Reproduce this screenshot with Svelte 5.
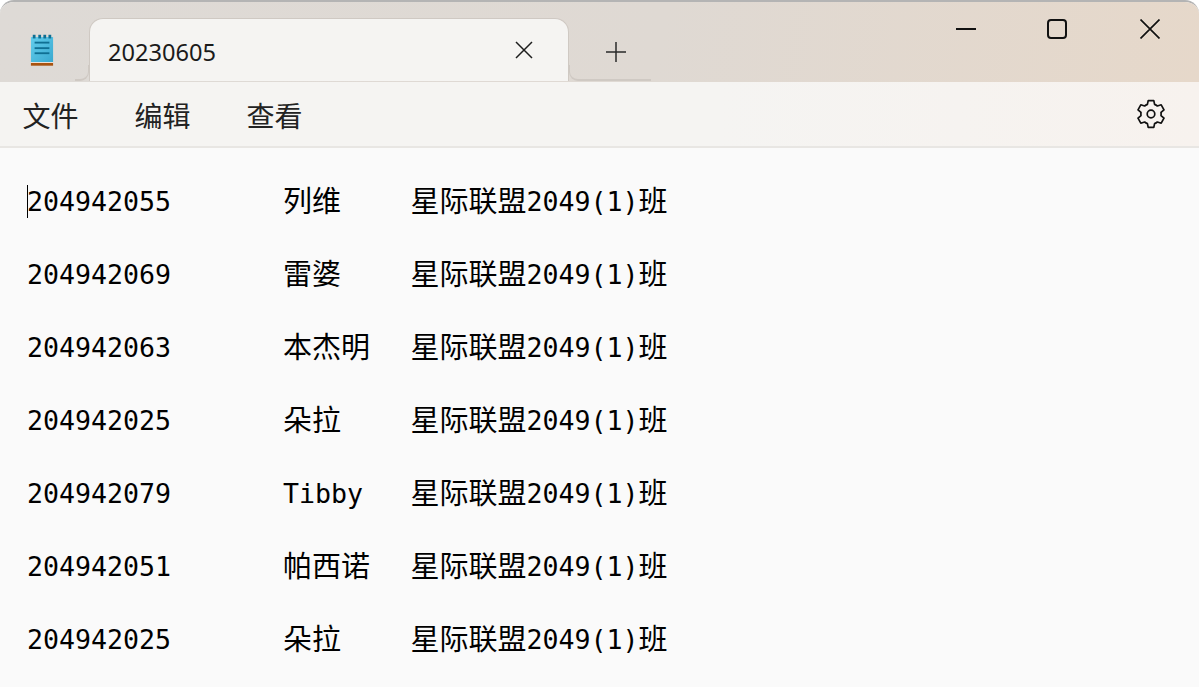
<script>
    const rows = [
        ['204942055', '列维'],
        ['204942069', '雷婆'],
        ['204942063', '本杰明'],
        ['204942025', '朵拉'],
        ['204942079', 'Tibby'],
        ['204942051', '帕西诺'],
        ['204942025', '朵拉']
    ];
    const menus = ['文件', '编辑', '查看'];
    const hasCjk = (s) => /[^\x00-\x7f]/.test(s);
</script>

<div class="window">
    <header class="titlebar">
        <div class="appicon">
            <svg viewBox="0 0 26 34" width="24" height="32" aria-hidden="true">
                <defs>
                    <linearGradient id="pad" x1="0" y1="0" x2="1" y2="1">
                        <stop offset="0" stop-color="#63cdec" />
                        <stop offset="1" stop-color="#3aa9d0" />
                    </linearGradient>
                </defs>
                <rect x="1" y="3" width="24" height="27" fill="url(#pad)" />
                <rect x="1" y="30" width="24" height="1" fill="#f4efe9" />
                <rect x="1" y="31" width="24" height="3" fill="#a9530f" />
                <g fill="#0f6f93">
                    <rect x="3" y="0.5" width="3" height="4" />
                    <rect x="9" y="0.5" width="3" height="4" />
                    <rect x="14.5" y="0.5" width="3" height="4" />
                    <rect x="20" y="0.5" width="3" height="4" />
                    <rect x="5" y="8" width="16" height="2" />
                    <rect x="5" y="14" width="16" height="2" />
                    <rect x="5" y="19.5" width="16" height="2" />
                </g>
            </svg>
        </div>
        <div class="tab">
            <span class="tab-title">20230605</span>
            <svg class="tab-close" viewBox="0 0 18 18" width="18" height="18" aria-hidden="true">
                <path d="M1 1 17 17M17 1 1 17" stroke="#1d1d1d" stroke-width="1.5" fill="none" />
            </svg>
        </div>
        <svg class="tab-add" viewBox="0 0 20 20" width="20" height="20" aria-hidden="true">
            <path d="M10 0V20M0 10H20" stroke="#2a2a2a" stroke-width="1.5" fill="none" />
        </svg>
        <div class="controls">
            <svg viewBox="0 0 20 20" width="20" height="20" aria-hidden="true">
                <path d="M0 10H20" stroke="#111" stroke-width="2" fill="none" />
            </svg>
            <svg viewBox="0 0 20 20" width="20" height="20" aria-hidden="true">
                <rect x="1" y="1" width="18" height="18" rx="3" stroke="#111" stroke-width="2" fill="none" />
            </svg>
            <svg viewBox="0 0 20 20" width="20" height="20" aria-hidden="true">
                <path d="M0.5 0.5 19.5 19.5M19.5 0.5 0.5 19.5" stroke="#111" stroke-width="1.7" fill="none" />
            </svg>
        </div>
    </header>

    <nav class="menubar">
        {#each menus as menu}
            <span class="menu">{menu}</span>
        {/each}
        <svg class="gear" viewBox="0 0 28 30" width="28" height="30" aria-hidden="true">
            <path
                d="M11.2 1.6 L16.8 1.6 L17.6 5.4 Q19.2 6 20.4 7 L24.2 5.8 L27 10.8 L24 13.4 Q24.2 15 24 16.6 L27 19.2 L24.2 24.2 L20.4 23 Q19.2 24 17.6 24.6 L16.8 28.4 L11.2 28.4 L10.4 24.6 Q8.8 24 7.6 23 L3.8 24.2 L1 19.2 L4 16.6 Q3.8 15 4 13.4 L1 10.8 L3.8 5.8 L7.6 7 Q8.8 6 10.4 5.4 Z"
                fill="none" stroke="#111" stroke-width="1.7" stroke-linejoin="round"
            />
            <circle cx="14" cy="15" r="3.8" fill="none" stroke="#111" stroke-width="1.7" />
        </svg>
    </nav>

    <main class="editor">
        {#each rows as [id, name], i}
            <div class="row">
                <span class="id">{#if i === 0}<i class="caret"></i>{/if}{id}</span>
                <span><span class:cjk={hasCjk(name)}>{name}</span></span>
                <span><span class="cjk">星际联盟</span>2049(1)<span class="cjk">班</span></span>
            </div>
        {/each}
    </main>
</div>

<style>
    :global(body) {
        background: #ffffff;
    }

    .window {
        height: 687px;
        overflow: hidden;
        display: flex;
        flex-direction: column;
        box-sizing: border-box;
        border-top: 2px solid #b4b4b4;
        border-radius: 14px 14px 0 0;
        background: #fafafa;
    }

    .titlebar {
        flex: 0 0 80px;
        display: flex;
        align-items: flex-start;
        background: linear-gradient(100deg, #dedad6 0%, #dfd9d3 55%, #e6d8ca 100%);
    }

    .appicon {
        flex: none;
        width: 89px;
        display: flex;
        justify-content: center;
        padding: 32px 5px 0 0;
        box-sizing: border-box;
    }

    .tab {
        flex: none;
        position: relative;
        width: 480px;
        height: 63px;
        margin-top: 16px;
        box-sizing: border-box;
        display: flex;
        align-items: center;
        padding: 3px 35px 0 18px;
        background: #f5f4f2;
        border: solid #cfc9c3;
        border-width: 1px 1px 0;
        border-radius: 14px 14px 0 0;
    }

    .tab::before,
    .tab::after {
        content: '';
        position: absolute;
        bottom: 0;
        height: 14px;
        border-bottom: 2px solid #cfc9c3;
    }

    .tab::before {
        left: -15px;
        width: 13px;
        border-right: 1px solid #cfc9c3;
        border-radius: 0 0 9px 0;
    }

    .tab::after {
        right: -83px;
        width: 81px;
        border-left: 1px solid #cfc9c3;
        border-radius: 0 0 0 9px;
    }

    .tab-title {
        flex: 1;
        font-family: 'Noto Sans', sans-serif;
        font-size: 23.6px;
        color: #1b1b1b;
    }

    .tab-close {
        margin-top: -3px;
    }

    .tab-add {
        flex: none;
        margin: 40px 0 0 37px;
    }

    .controls {
        margin-left: auto;
        display: flex;
        gap: 73px;
        padding: 17px 39px 0 0;
    }

    .controls svg {
        display: block;
    }

    .controls svg:first-child {
        margin-right: -2px;
    }

    .menubar {
        flex: 0 0 66px;
        box-sizing: border-box;
        display: flex;
        align-items: center;
        gap: 56px;
        padding: 2px 34px 0 22.5px;
        background: linear-gradient(90deg, #f5f4f2 0%, #f5f4f2 60%, #f7f2ee 100%);
        border-bottom: 2px solid #e8e6e3;
    }

    .menu {
        font-family: 'Noto Sans CJK SC', sans-serif;
        font-size: 28px;
        line-height: 40px;
        color: #222222;
    }

    .gear {
        margin-left: auto;
        margin-top: -2px;
    }

    .editor {
        flex: 1;
        padding: 17px 0 0 27px;
        font-family: 'DejaVu Sans Mono', monospace;
        font-size: 26.6px;
        line-height: 73px;
        color: #000000;
    }

    .row {
        display: grid;
        grid-template-columns: 256px 127.5px auto;
        justify-content: start;
        align-items: baseline;
        height: 73px;
    }

    .id {
        position: relative;
    }

    .caret {
        position: absolute;
        left: 0;
        top: 20px;
        height: 33px;
        width: 1px;
        background: #000000;
    }

    .cjk {
        font-family: 'Noto Sans CJK SC', sans-serif;
        font-size: 29px;
        line-height: 1;
        vertical-align: -1px;
    }
</style>
